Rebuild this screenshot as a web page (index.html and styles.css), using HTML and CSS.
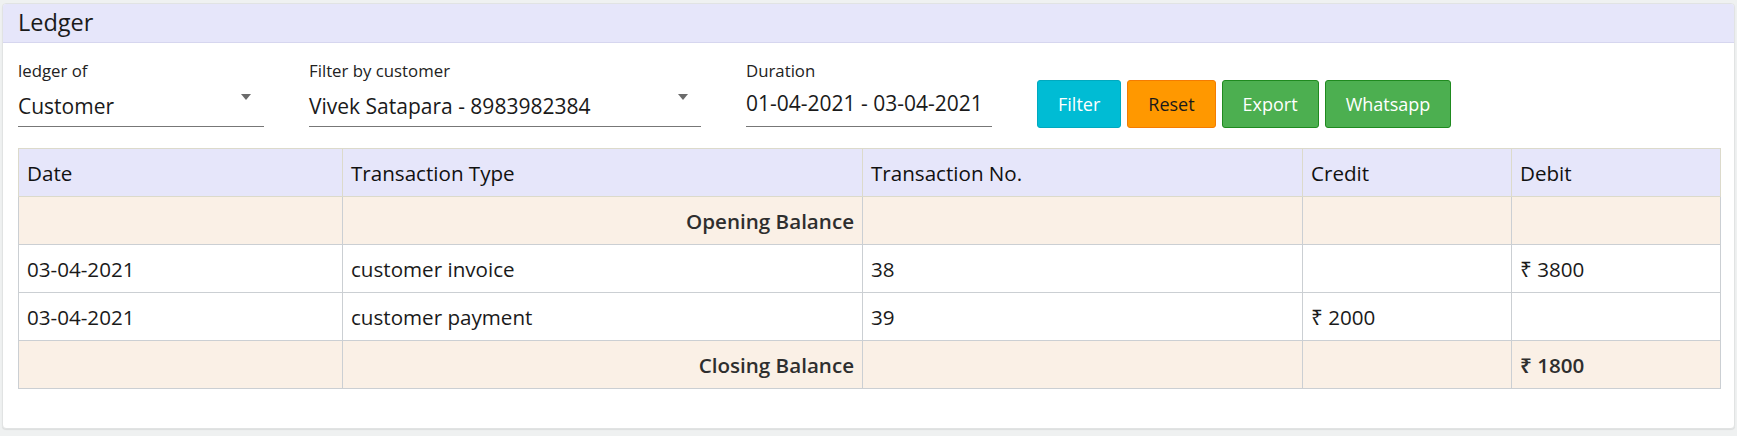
FILE: index.html
```html
<!DOCTYPE html>
<html>
<head>
<meta charset="utf-8">
<link rel="stylesheet" href="styles.css">
</head>
<body>
<div class="card">
  <div class="card-header">Ledger</div>
  <div class="card-body">
    <div class="filters">
      <div class="field field-sm">
        <div class="label">ledger of</div>
        <div class="value select">Customer<span class="caret"></span></div>
      </div>
      <div class="field field-lg">
        <div class="label">Filter by customer</div>
        <div class="value select">Vivek Satapara - 8983982384<span class="caret"></span></div>
      </div>
      <div class="field field-sm field-date">
        <div class="label">Duration</div>
        <div class="value">01-04-2021 - 03-04-2021</div>
      </div>
      <div class="buttons">
        <button class="btn btn-info">Filter</button>
        <button class="btn btn-warning">Reset</button>
        <button class="btn btn-success">Export</button>
        <button class="btn btn-success">Whatsapp</button>
      </div>
    </div>
    <table class="ledger">
      <colgroup>
        <col class="c1"><col class="c2"><col class="c3"><col class="c4"><col class="c5">
      </colgroup>
      <thead>
        <tr><th>Date</th><th>Transaction Type</th><th>Transaction No.</th><th>Credit</th><th>Debit</th></tr>
      </thead>
      <tbody>
        <tr class="balance"><td></td><td class="right">Opening Balance</td><td></td><td></td><td></td></tr>
        <tr><td>03-04-2021</td><td>customer invoice</td><td>38</td><td></td><td>₹ 3800</td></tr>
        <tr><td>03-04-2021</td><td>customer payment</td><td>39</td><td>₹ 2000</td><td></td></tr>
        <tr class="balance"><td></td><td class="right">Closing Balance</td><td></td><td></td><td>₹ 1800</td></tr>
      </tbody>
    </table>
  </div>
</div>
</body>
</html>
```

FILE: styles.css
```css
html, body {
  margin: 0;
  padding: 0;
}
body {
  background: #eff1f1;
  font-family: "Open Sans", "Noto Sans", "DejaVu Sans", sans-serif;
  color: #1a1a1a;
  padding: 3px 2px 8px 2px;
}
.card {
  background: #fff;
  border: 1px solid #e1e3e3;
  border-radius: 4px;
  box-shadow: 0 1px 1px rgba(0,0,0,0.08);
  overflow: hidden;
}
.card-header {
  background: #e6e6fa;
  height: 38px;
  line-height: 36px;
  padding: 0 15px;
  font-size: 23.5px;
  color: #1a1a1a;
  border-bottom: 1px solid #d6d6ef;
}
.card-body {
  padding: 17px 15px 39px 15px;
}
.filters {
  display: flex;
  align-items: flex-end;
  gap: 45px;
}
.field {
  display: flex;
  flex-direction: column;
}
.field-sm { width: 246px; }
.field-lg { width: 392px; }
.label {
  font-size: 16.8px;
  line-height: 22px;
  margin-bottom: 9px;
  color: #222;
}
.value {
  position: relative;
  font-size: 21px;
  line-height: 30px;
  padding-bottom: 5px;
  border-bottom: 1px solid #777;
  color: #1a1a1a;
  white-space: nowrap;
}
.field-date .label { margin-bottom: 6px; }
.field-date .value { padding-bottom: 8px; }
.caret {
  position: absolute;
  right: 13px;
  top: 3px;
  width: 0;
  height: 0;
  border-left: 5px solid transparent;
  border-right: 5px solid transparent;
  border-top: 6px solid #6b6b6b;
}
.buttons {
  display: flex;
  gap: 6px;
  margin-bottom: -1px;
}
.btn {
  font-family: inherit;
  font-size: 18px;
  height: 48px;
  padding: 0 20px;
  border-radius: 3px;
  border: 1px solid;
  cursor: pointer;
}
.btn-info {
  background: #00bcd4;
  border-color: #00a9bf;
  color: #fff;
}
.btn-warning {
  background: #ff9800;
  border-color: #f57c00;
  color: #1a1a1a;
}
.btn-success {
  background: #4caf50;
  border-color: #1f8a1f;
  color: #fff;
}
.ledger {
  margin-top: 21px;
  width: 100%;
  border-collapse: collapse;
  table-layout: fixed;
  font-size: 20.6px;
}
.c1 { width: 324px; }
.c2 { width: 520px; }
.c3 { width: 440px; }
.c4 { width: 209px; }
.c5 { width: 209px; }
.ledger th, .ledger td {
  height: 47px;
  padding: 0 8px;
  text-align: left;
  vertical-align: middle;
  white-space: nowrap;
}
.ledger th {
  font-weight: 400;
  background: #e6e6fa;
  border: 1px solid #dcdacb;
  color: #111;
}
.ledger td {
  border: 1px solid #cbcfd3;
  color: #1a1a1a;
}
.ledger tr.balance td {
  background: #faf0e6;
  font-weight: 600;
  color: #2e2e2e;
}
.ledger td.right {
  text-align: right;
}
```
